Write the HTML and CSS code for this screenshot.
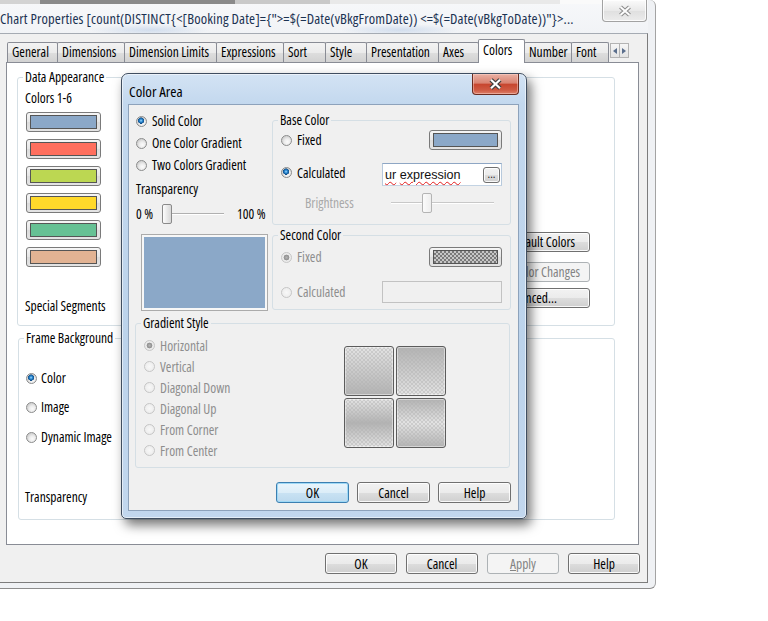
FILE: index.html
```html
<!DOCTYPE html>
<html>
<head>
<meta charset="utf-8">
<title>Chart Properties</title>
<link rel="stylesheet" href="styles.css">
</head>
<body>
<div class="screen">
  <div class="win">
    <div class="titlebar">
      <div class="wtitle">Chart Properties [count(DISTINCT{&lt;[Booking Date]={"&gt;=$(=Date(vBkgFromDate)) &lt;=$(=Date(vBkgToDate))"}&gt;...</div>
      <div class="wclose">
        <svg width="14" height="12" viewBox="0 0 14 12"><path class="xo" d="M2.5 2 L11.5 10 M11.5 2 L2.5 10"/><path class="xi" d="M2.5 2 L11.5 10 M11.5 2 L2.5 10"/></svg>
      </div>
    </div>
    <div class="client">
      <div class="tabs">
        <div class="tab w-general">General</div>
        <div class="tab w-dims">Dimensions</div>
        <div class="tab w-dimlim">Dimension Limits</div>
        <div class="tab w-expr">Expressions</div>
        <div class="tab w-sort">Sort</div>
        <div class="tab w-style">Style</div>
        <div class="tab w-pres">Presentation</div>
        <div class="tab w-axes">Axes</div>
        <div class="tab sel w-colors">Colors</div>
        <div class="tab w-number">Number</div>
        <div class="tab w-font">Font</div>
        <div class="tscroll">
          <span class="sbtn"><svg width="4" height="6" viewBox="0 0 4 6"><path d="M4 0 L0 3 L4 6 Z"/></svg></span>
          <span class="sbtn"><svg width="4" height="6" viewBox="0 0 4 6"><path d="M0 0 L4 3 L0 6 Z"/></svg></span>
        </div>
      </div>
      <div class="panel">
        <fieldset class="grp grp-data">
          <legend>Data Appearance</legend>
          <div class="dbody">
            <div class="dleft">
              <div class="lbl">Colors 1-6</div>
              <div class="swatches">
                <div class="swatch"><div class="fill c1"></div></div>
                <div class="swatch"><div class="fill c2"></div></div>
                <div class="swatch"><div class="fill c3"></div></div>
                <div class="swatch"><div class="fill c4"></div></div>
                <div class="swatch"><div class="fill c5"></div></div>
                <div class="swatch"><div class="fill c6"></div></div>
              </div>
              <div class="lbl special">Special Segments</div>
            </div>
            <div class="dright">
              <div class="btn sidebtn first">Default Colors</div>
              <div class="btn sidebtn dis second">Undo Color Changes</div>
              <div class="btn sidebtn third">Advanced...</div>
            </div>
          </div>
        </fieldset>
        <fieldset class="grp grp-frame">
          <legend>Frame Background</legend>
          <div class="fbody">
            <div class="frow r1"><span class="radio on"></span><span>Color</span></div>
            <div class="frow r2"><span class="radio"></span><span>Image</span></div>
            <div class="frow r3"><span class="radio"></span><span>Dynamic Image</span></div>
            <div class="lbl ftrans">Transparency</div>
          </div>
        </fieldset>
      </div>
      <div class="mainbtns">
        <div class="btn mbtn">OK</div>
        <div class="btn mbtn">Cancel</div>
        <div class="btn mbtn dis"><span><u>A</u>pply</span></div>
        <div class="btn mbtn">Help</div>
      </div>
    </div>
  </div>

  <div class="dlg">
    <div class="dtitle">
      <div class="dt">Color Area</div>
      <div class="dclose">
        <svg width="15" height="12" viewBox="0 0 15 12"><path class="dxo" d="M3 1.8 L12 10.2 M12 1.8 L3 10.2"/><path class="dxi" d="M3 1.8 L12 10.2 M12 1.8 L3 10.2"/></svg>
      </div>
    </div>
    <div class="dclient">
      <div class="lcol">
        <div class="ropt"><span class="radio on"></span><span>Solid Color</span></div>
        <div class="ropt"><span class="radio"></span><span>One Color Gradient</span></div>
        <div class="ropt"><span class="radio"></span><span>Two Colors Gradient</span></div>
        <div class="lbl trans">Transparency</div>
        <div class="tslider">
          <span class="zero">0 %</span>
          <div class="slider tslide"><span class="thumb"></span></div>
          <span class="hundred">100 %</span>
        </div>
      </div>
      <fieldset class="grp grp-base">
        <legend>Base Color</legend>
        <div class="gbody">
          <div class="brow"><span class="radio"></span><span class="rtxt">Fixed</span><div class="swbtn"><div class="fill c1"></div></div></div>
          <div class="brow calc"><span class="radio on"></span><span class="rtxt">Calculated</span>
            <div class="tfield"><span class="sq">ur</span>&nbsp;<span class="sq">expression</span><span class="btn ellip">...</span></div>
          </div>
          <div class="brow bright"><span class="distxt">Brightness</span><div class="slider bslide"><span class="thumb dis"></span></div></div>
        </div>
      </fieldset>
      <div class="preview"><div class="pfill"></div></div>
      <fieldset class="grp grp-second">
        <legend>Second Color</legend>
        <div class="gbody second">
          <div class="brow"><span class="radio dis on"></span><span class="rtxt distxt2">Fixed</span><div class="swbtn"><div class="fill checker"></div></div></div>
          <div class="brow calc2"><span class="radio dis"></span><span class="rtxt distxt2">Calculated</span><div class="tfield dis"></div></div>
        </div>
      </fieldset>
      <fieldset class="grp grp-grad">
        <legend>Gradient Style</legend>
        <div class="gradbody">
          <div class="gradopts">
            <div class="gopt"><span class="radio dis on"></span><span>Horizontal</span></div>
            <div class="gopt"><span class="radio dis"></span><span>Vertical</span></div>
            <div class="gopt"><span class="radio dis"></span><span>Diagonal Down</span></div>
            <div class="gopt"><span class="radio dis"></span><span>Diagonal Up</span></div>
            <div class="gopt"><span class="radio dis"></span><span>From Corner</span></div>
            <div class="gopt"><span class="radio dis"></span><span>From Center</span></div>
          </div>
          <div class="tiles">
            <div class="tile t1"></div>
            <div class="tile t2"></div>
            <div class="tile t3"></div>
            <div class="tile t4"></div>
          </div>
        </div>
      </fieldset>
      <div class="dbtns">
        <div class="btn dbtn def">OK</div>
        <div class="btn dbtn">Cancel</div>
        <div class="btn dbtn">Help</div>
      </div>
    </div>
  </div>
</div>
</body>
</html>
```

FILE: styles.css
```css
:root {
  --ui: "Open Sans", "Liberation Sans", Arial, sans-serif;
}
* { box-sizing: border-box; }
html, body { margin: 0; padding: 0; }
body {
  width: 768px;
  height: 621px;
  overflow: hidden;
  background: #fff;
  font-family: var(--ui);
  font-stretch: condensed;
  font-size: 13.5px;
  color: #000;
}
.screen { position: relative; width: 768px; height: 621px; }

/* group boxes (generic first so modifiers can override) */
.grp {
  margin: 0;
  padding: 0;
  border: 1px solid #d5dfe5;
  border-radius: 3px;
  min-width: 0;
}
.grp > legend {
  margin-left: 5px;
  padding: 0 2px;
  height: 14px;
  line-height: 14px;
}
.lbl { line-height: 16px; height: 16px; white-space: nowrap; }

/* ---------- main window ---------- */
.win {
  width: 656px;
  height: 589px;
  display: flex;
  flex-direction: column;
  padding: 0 7px 5px 0;
  background: #eff1f4;
  border-right: 1px solid #a3a3a3;
  border-bottom: 1px solid #8c8c8c;
  border-bottom-right-radius: 6px;
  border-top-right-radius: 6px;
}
.titlebar {
  height: 33px;
  flex: none;
  display: flex;
  background:
    linear-gradient(to right, #d3d3d3 0 40px, #8a8a8a 40px 235px, #c9c9c9 235px 330px, #e9e9e9 330px 560px, #fafafa 560px) 0 0 / 100% 4px no-repeat,
    radial-gradient(ellipse 60px 6px at 150px 30px, rgba(150,180,220,.35), transparent),
    radial-gradient(ellipse 60px 6px at 400px 30px, rgba(150,180,220,.35), transparent),
    linear-gradient(#f7f8fa, #f1f3f6);
}
.wtitle {
  flex: 1;
  padding-top: 4px;
  line-height: 29px;
  white-space: nowrap;
  overflow: hidden;
  color: #1b3252;
  font-size: 14.5px;
  letter-spacing: 0.15px;
}
.wclose {
  flex: none;
  width: 45px;
  height: 22px;
  margin-right: 1px;
  border: 1px solid #a2a2a2;
  border-top: none;
  border-radius: 0 0 4px 4px;
  background: linear-gradient(#fbfbfb, #e9e9e9 50%, #dfdfdf 51%, #ececec);
  display: flex;
  align-items: center;
  justify-content: center;
  box-shadow: inset 0 0 0 1px rgba(255,255,255,.8);
}
.xo { stroke: #8d8d8d; stroke-width: 4.2; fill: none; }
.xi { stroke: #fdfdfd; stroke-width: 2; fill: none; }

.client {
  flex: 1;
  border-top: 1px solid #a5abb3;
  border-right: 1px solid #7c7c7c;
  border-bottom: 1px solid #7c7c7c;
  background: #f0f0f0;
  padding-top: 5px;
  display: flex;
  flex-direction: column;
}
.tabs {
  display: flex;
  align-items: flex-end;
  height: 23px;
  padding-left: 7px;
}
.tab {
  height: 20px;
  margin-right: -1px;
  border: 1px solid #898c95;
  border-bottom: none;
  border-radius: 2px 2px 0 0;
  background: linear-gradient(#f3f3f3, #ebebeb 50%, #dedede 51%, #d2d2d2);
  padding-left: 4px;
  line-height: 19px;
  white-space: nowrap;
  overflow: hidden;
}
.tab.sel {
  height: 24px;
  margin-bottom: -1px;
  background: #fff;
  position: relative;
  z-index: 1;
  line-height: 20px;
}
.w-general { width: 51px; }
.w-dims { width: 68px; }
.w-dimlim { width: 93px; }
.w-expr { width: 68px; }
.w-sort { width: 43px; }
.w-style { width: 42px; }
.w-pres { width: 73px; }
.w-axes { width: 41px; }
.w-colors { width: 47px; }
.w-number { width: 48px; }
.w-font { width: 38px; }
.tscroll {
  display: flex;
  align-self: flex-start;
  margin-top: 4px;
  margin-left: 2px;
}
.sbtn {
  width: 10px;
  height: 15px;
  border: 1px solid #b3b3b3;
  background: linear-gradient(#f6f6f6, #e3e3e3);
  display: flex;
  align-items: center;
  justify-content: center;
}
.sbtn + .sbtn { margin-left: -1px; }
.sbtn svg path { fill: #5a6e8c; }

.panel {
  margin-left: 6px;
  width: 633px;
  height: 483px;
  flex: none;
  background: #fff;
  border: 1px solid #898c95;
  padding: 7px 0 0 10px;
}

.grp-data { width: 598px; height: 256px; }
.dbody { display: flex; padding: 6px 24px 0 7px; }
.dleft { flex: 1; }
.swatches { display: flex; flex-direction: column; gap: 7px; margin: 6px 0 0 1px; }
.swatch, .swbtn {
  width: 75px;
  height: 20px;
  border: 1px solid #7a7a7a;
  border-radius: 3px;
  padding: 2px 3px;
  background: linear-gradient(#f6f6f6, #e6e6e6 50%, #dcdcdc 51%, #e4e4e4);
}
.fill { height: 100%; border: 1px solid #555; }
.c1 { background: #8ba8c8; }
.c2 { background: #ff6f5e; }
.c3 { background: #bcd752; }
.c4 { background: #ffd92b; }
.c5 { background: #66c194; }
.c6 { background: #e2b393; }
.special { margin-top: 31px; }
.dright {
  width: 120px;
  display: flex;
  flex-direction: column;
  padding-top: 142px;
}
.btn.sidebtn { width: 120px; height: 20px; justify-content: flex-end; }
.sidebtn.first { padding-right: 14px; }
.sidebtn.second { margin-top: 10px; padding-right: 9px; }
.sidebtn.third { margin-top: 6px; padding-right: 32px; }

.grp-frame { width: 597px; height: 189px; margin: 5px 0 0 1px; }
.fbody { padding-left: 7px; }
.frow { display: flex; align-items: center; gap: 4px; height: 16px; }
.frow.r1 { margin-top: 25px; }
.frow.r2 { margin-top: 13px; }
.frow.r3 { margin-top: 14px; }
.ftrans { margin: 44px 0 0 -1px; }

/* buttons */
.btn {
  display: flex;
  align-items: center;
  justify-content: center;
  border: 1px solid #707070;
  border-radius: 3px;
  background: linear-gradient(#f2f2f2, #ebebeb 50%, #dddddd 51%, #cfcfcf);
  box-shadow: inset 0 0 0 1px rgba(255,255,255,.85);
  white-space: nowrap;
  overflow: hidden;
}
.btn.dis {
  border-color: #adb2b5;
  background: #f4f4f4;
  color: #838383;
  box-shadow: none;
}
.mainbtns {
  display: flex;
  justify-content: flex-end;
  gap: 9px;
  width: 634px;
  margin: 8px 0 0 6px;
}
.mbtn { width: 72px; height: 21px; }

/* radios */
.radio {
  flex: none;
  width: 11px;
  height: 11px;
  border-radius: 50%;
  border: 1px solid #8b8c8c;
  background: radial-gradient(circle at 60% 65%, #fbfbfb 0, #ececec 3px, #d2d2d2 5.5px);
}
.radio.on {
  background:
    radial-gradient(circle at 45% 40%, #a4dcff 0, #2a8ad4 1.4px, #114c86 3px, rgba(0,0,0,0) 3.3px),
    radial-gradient(circle at 60% 65%, #fbfbfb 0, #ececec 3px, #d2d2d2 5.5px);
}
.radio.dis {
  border-color: #c6c6c6;
  background: radial-gradient(circle, #f8f8f8 0, #ececec 5px);
}
.radio.dis.on {
  background:
    radial-gradient(circle, #b4b4b4 0, #8f8f8f 2.6px, rgba(0,0,0,0) 3.2px),
    radial-gradient(circle, #f8f8f8 0, #e8e8e8 5px);
}

/* ---------- Color Area dialog ---------- */
.dlg {
  position: absolute;
  left: 121px;
  top: 73px;
  width: 406px;
  height: 446px;
  border: 1px solid #404e60;
  border-radius: 7px 7px 5px 5px;
  padding: 0 7px 7px 6px;
  display: flex;
  flex-direction: column;
  background: linear-gradient(#d3e3f4, #c3d8ee 30px, #bcd3eb 60%, #c2d7ee);
  box-shadow: 4px 6px 12px rgba(0,0,0,.55), inset 0 0 0 1px rgba(255,255,255,.55);
}
.dtitle { height: 30px; flex: none; display: flex; }
.dt {
  flex: 1;
  padding: 3px 0 0 1px;
  line-height: 28px;
  font-size: 15px;
  color: #000;
}
.dclose {
  flex: none;
  width: 47px;
  height: 21px;
  border: 1px solid #6b2c20;
  border-top: none;
  border-radius: 0 0 4px 4px;
  background: linear-gradient(#eab1a4, #d98372 45%, #c7462f 52%, #cf5a43 80%, #dc7f69);
  box-shadow: inset 0 0 0 1px rgba(255,220,210,.45);
  display: flex;
  align-items: center;
  justify-content: center;
}
.dxo { stroke: #3d3d3d; stroke-width: 4.4; fill: none; }
.dxi { stroke: #ffffff; stroke-width: 2.2; fill: none; }

.dclient {
  height: 407px;
  flex: none;
  border: 1px solid #8da2bb;
  background: #f0f0f0;
  padding: 5px 7px 0 6px;
  display: grid;
  grid-template-columns: 137px 239px;
  align-items: start;
  align-content: start;
}
.lcol { padding-left: 1px; }
.ropt { display: flex; align-items: center; gap: 5px; height: 22px; white-space: nowrap; }
.trans { margin-top: 5px; }
.tslider { display: flex; align-items: center; height: 20px; margin-top: 7px; white-space: nowrap; }
.zero { width: 26px; }
.hundred { margin-left: 13px; }
.slider {
  height: 20px;
  display: flex;
  background:
    linear-gradient(#b0b0b0, #b0b0b0) 0 9px / 100% 1px no-repeat,
    linear-gradient(#fff, #fff) 0 10px / 100% 1px no-repeat;
}
.tslide { width: 62px; flex: none; }
.thumb {
  width: 10px;
  height: 20px;
  border: 1px solid #8a8a8a;
  border-radius: 2px;
  background: linear-gradient(to right, #fdfdfd, #e6e6e6 60%, #d8d8d8);
}
.thumb.dis { border-color: #b4b4b4; background: linear-gradient(to right, #fbfbfb, #eeeeee); }
.bslide {
  width: 103px;
  margin-left: auto;
  padding-left: 31px;
  background:
    linear-gradient(#c8c8c8, #c8c8c8) 0 9px / 100% 1px no-repeat,
    linear-gradient(#fff, #fff) 0 10px / 100% 1px no-repeat;
}

.grp-base { margin-top: 3px; height: 112px; }
.gbody { padding: 3px 8px 0 8px; }
.brow { display: flex; align-items: center; height: 20px; white-space: nowrap; }
.rtxt { margin-left: 5px; }
.brow .swbtn { margin-left: auto; width: 73px; }
.brow.calc { margin-top: 13px; height: 23px; }
.brow.calc > .radio, .brow.calc > .rtxt { margin-bottom: 4px; }
.brow.bright { margin-top: 7px; padding-right: 8px; }
.distxt { margin-left: 24px; color: #a9a9a9; }
.distxt2 { color: #8e8e8e; }
.tfield {
  margin-left: auto;
  width: 120px;
  height: 23px;
  border: 1px solid;
  border-color: #8ea6c4 #b7c9dc #c3d3e3 #b7c9dc;
  background: #fff;
  display: flex;
  align-items: center;
  padding: 0 1px 0 2px;
  font-family: "Liberation Sans", Arial, sans-serif;
  font-stretch: normal;
  font-size: 12.6px;
  color: #111;
}
.sq {
  text-decoration: underline wavy #e21b1b;
  text-decoration-thickness: 1px;
  text-underline-offset: 2px;
}
.ellip {
  margin-left: auto;
  width: 17px;
  height: 16px;
  font-size: 10px;
  line-height: 10px;
  align-items: flex-end;
  padding-bottom: 3px;
  font-family: var(--ui);
}
.tfield.dis { background: #f0f0f0; border-color: #c2c2c2; height: 22px; }

.preview {
  margin: 9px 0 0 6px;
  width: 127px;
  height: 77px;
  border: 1px solid #ababab;
  padding: 2px;
  background: #f7f7f7;
}
.pfill { height: 100%; background: #8ba8c8; }

.grp-second { margin-top: 3px; height: 82px; }
.gbody.second { padding-top: 5px; }
.brow.calc2 { margin-top: 14px; height: 22px; }
.checker {
  background: repeating-conic-gradient(#7a7a7a 0 25%, #c6c6c6 0 50%) 0 0 / 4px 4px;
}

.grp-grad { grid-column: 1 / -1; width: 375px; height: 152px; margin-top: 5px; }
.gradbody { display: flex; padding-left: 8px; }
.gradopts { width: 200px; padding-top: 5px; color: #8e8e8e; }
.gopt { display: flex; align-items: center; gap: 5px; height: 21px; white-space: nowrap; }
.tiles {
  display: grid;
  grid-template-columns: 50px 50px;
  grid-auto-rows: 50px;
  gap: 2px;
  margin-top: 16px;
}
.tile {
  border: 1px solid #5c5c5c;
  border-radius: 3px;
  box-shadow: inset 0 0 0 1px rgba(255,255,255,.45);
}
.t1 { background: linear-gradient(rgba(176,176,176,0), rgba(176,176,176,.95)), repeating-conic-gradient(#cdcdcd 0 25%, #e3e3e3 0 50%) 0 0 / 4px 4px; }
.t2 { background: linear-gradient(rgba(176,176,176,.95), rgba(176,176,176,0)), repeating-conic-gradient(#cdcdcd 0 25%, #e3e3e3 0 50%) 0 0 / 4px 4px; }
.t3 { background: linear-gradient(rgba(176,176,176,0), rgba(176,176,176,.95) 50%, rgba(176,176,176,0)), repeating-conic-gradient(#cdcdcd 0 25%, #e3e3e3 0 50%) 0 0 / 4px 4px; }
.t4 { background: linear-gradient(rgba(176,176,176,.95), rgba(176,176,176,0) 50%, rgba(176,176,176,.95)), repeating-conic-gradient(#cdcdcd 0 25%, #e3e3e3 0 50%) 0 0 / 4px 4px; }

.dbtns {
  grid-column: 1 / -1;
  display: flex;
  justify-content: flex-end;
  gap: 8px;
  margin-top: 14px;
}
.dbtn { width: 73px; height: 21px; }
.dbtn.def {
  border-color: #3c7fb1;
  background: linear-gradient(#eaf5fc, #dcedf8 50%, #c9e2f3 51%, #bcd9ee);
  box-shadow: inset 0 0 0 1px #9fd9f6;
}
```
